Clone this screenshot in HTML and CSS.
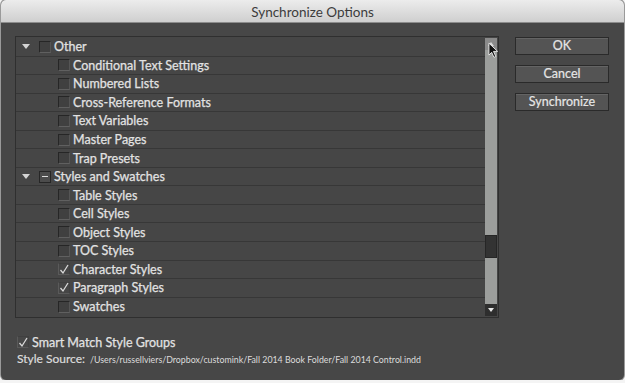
FILE: index.html
```html
<!DOCTYPE html>
<html>
<head>
    <title>Synchronize Options</title>
    <link rel="stylesheet" href="styles.css">
</head>
<body>
    <div class="window">
        <div class="titleBar">Synchronize Options</div>
        <div class="content">
            <div class="listBox">
                <div class="rows">
                    <div class="row group"><span class="twisty"></span><span class="check"></span>Other</div>
                    <div class="row item"><span class="check"></span>Conditional Text Settings</div>
                    <div class="row item"><span class="check"></span>Numbered Lists</div>
                    <div class="row item"><span class="check"></span>Cross-Reference Formats</div>
                    <div class="row item"><span class="check"></span>Text Variables</div>
                    <div class="row item"><span class="check"></span>Master Pages</div>
                    <div class="row item"><span class="check"></span>Trap Presets</div>
                    <div class="row group"><span class="twisty"></span><span class="check mixed"></span>Styles and Swatches</div>
                    <div class="row item"><span class="check"></span>Table Styles</div>
                    <div class="row item"><span class="check"></span>Cell Styles</div>
                    <div class="row item"><span class="check"></span>Object Styles</div>
                    <div class="row item"><span class="check"></span>TOC Styles</div>
                    <div class="row item"><span class="check checked"><svg viewBox="0 0 10 10" width="11" height="11"><path d="M1.5 5.5 L4 8.5 L9 0.5" fill="none" stroke="#d8d8d8" stroke-width="1.3"/></svg></span>Character Styles</div>
                    <div class="row item"><span class="check checked"><svg viewBox="0 0 10 10" width="11" height="11"><path d="M1.5 5.5 L4 8.5 L9 0.5" fill="none" stroke="#d8d8d8" stroke-width="1.3"/></svg></span>Paragraph Styles</div>
                    <div class="row item last"><span class="check"></span>Swatches</div>
                </div>
                <div class="scrollBar">
                    <div class="arrow up"></div>
                    <div class="track top"></div>
                    <div class="thumb"></div>
                    <div class="track bottom"></div>
                    <div class="arrow down"></div>
                </div>
                <svg class="cursor" viewBox="0 0 12 18" width="11" height="17">
                    <path d="M1 1 L1 14 L4 11 L6.5 16.5 L8.5 15.5 L6 10 L10.5 10 Z" fill="#111" stroke="#eee" stroke-width="1"/>
                </svg>
            </div>
            <div class="buttons">
                <div class="button">OK</div>
                <div class="button">Cancel</div>
                <div class="button">Synchronize</div>
            </div>
        </div>
        <div class="footer">
            <div class="smartMatch">
                <span class="check checked"><svg viewBox="0 0 10 10" width="11" height="11"><path d="M1.5 5.5 L4 8.5 L9 0.5" fill="none" stroke="#d8d8d8" stroke-width="1.3"/></svg></span>Smart Match Style Groups
            </div>
            <div class="source">
                <span class="sourceLabel">Style Source:</span>
                <span class="sourcePath">/Users/russellviers/Dropbox/customink/Fall 2014 Book Folder/Fall 2014 Control.indd</span>
            </div>
        </div>
    </div>
</body>
</html>
```

FILE: styles.css
```css
body {
    margin: 0;
    background-color: #f4f4f4;
    font-family: "Lato", "Open Sans", sans-serif;
}

.window {
    width: 623px;
    height: 380px;
    margin-left: 1px;
    background-color: #474747;
    border-radius: 5px;
    overflow: hidden;
    box-shadow: 0 0 0 1px #9a9a9a;
}

.titleBar {
    height: 22px;
    line-height: 24px;
    text-align: center;
    font-size: 13.5px;
    color: #3c3c3c;
    background: linear-gradient(#ececec, #cfcfcf);
    border-bottom: 1px solid #8c8c8c;
}

.content {
    display: flex;
    padding: 13px 0 0 14px;
}

.listBox {
    position: relative;
    display: flex;
    width: 484px;
    height: 282px;
    box-sizing: border-box;
    border: 1px solid #2f2f2f;
    background-color: #464646;
}

.rows {
    flex: 1;
    padding-top: 1px;
}

.row {
    display: flex;
    align-items: center;
    height: 18.55px;
    box-sizing: border-box;
    border-bottom: 1px solid #373737;
    font-size: 12.5px;
    color: #e2e2e2;
    -webkit-text-stroke: 0.25px #e2e2e2;
}

.row.last {
    border-bottom: none;
}

.twisty {
    width: 0;
    height: 0;
    margin: 0 9px 0 6px;
    border-left: 4px solid transparent;
    border-right: 4px solid transparent;
    border-top: 5px solid #d4d4d4;
}

.check {
    display: inline-flex;
    align-items: center;
    justify-content: center;
    width: 10px;
    height: 10px;
    margin-right: 3px;
    background-color: #404040;
    border: 1px solid #262626;
    border-bottom-color: #606060;
    border-right-color: #555555;
    flex-shrink: 0;
}

.check.mixed {
    background-color: #4c4c4c;
    border-color: #262626;
}

.check.mixed::after {
    content: "";
    width: 6px;
    height: 1.5px;
    background-color: #dcdcdc;
}

.check.checked {
    background: none;
    border-color: #404040;
    border-left-color: #5a5a5a;
    border-bottom-color: #5a5a5a;
}

.item .check {
    margin-left: 42px;
}

.scrollBar {
    width: 12px;
    margin: 1px 1px 1px 0;
    display: flex;
    flex-direction: column;
}

.arrow {
    height: 12px;
    background-color: #2e2e2e;
    display: flex;
    align-items: center;
    justify-content: center;
}

.arrow.down::after {
    content: "";
    border-left: 3.5px solid transparent;
    border-right: 3.5px solid transparent;
    border-top: 4px solid #e8e8e8;
}

.arrow.up {
    background-color: #8a8a8a;
}

.arrow.up::after {
    content: "";
    border-left: 3px solid transparent;
    border-right: 3px solid transparent;
    border-bottom: 4px solid #d8d8d8;
}

.track {
    background-color: #9c9e9c;
}

.track.top {
    height: 185px;
}

.track.bottom {
    flex: 1;
}

.thumb {
    height: 23px;
    background-color: #333333;
    border: 1px solid #262626;
    box-sizing: border-box;
}

.cursor {
    position: absolute;
    left: 472px;
    top: 5px;
}

.buttons {
    display: flex;
    flex-direction: column;
    margin-left: 16px;
    padding-top: 1px;
}

.button {
    width: 92px;
    height: 16px;
    line-height: 16px;
    margin-bottom: 10px;
    text-align: center;
    font-size: 12.5px;
    color: #e6e6e6;
    -webkit-text-stroke: 0.2px #e6e6e6;
    background-color: #545454;
    border: 1px solid #2a2a2a;
    box-shadow: inset 0 1px 0 #646464;
}

.footer {
    padding: 17px 0 0 16px;
}

.smartMatch {
    display: flex;
    align-items: center;
    font-size: 12.5px;
    color: #e2e2e2;
    -webkit-text-stroke: 0.25px #e2e2e2;
    height: 14px;
}

.smartMatch .check {
    margin-right: 3px;
    margin-left: 0;
}

.source {
    display: flex;
    align-items: baseline;
    margin-top: 2px;
    color: #dcdcdc;
}

.sourceLabel {
    font-size: 12px;
    margin-right: 5px;
    -webkit-text-stroke: 0.2px #dcdcdc;
}

.sourcePath {
    font-size: 8.8px;
}
```
